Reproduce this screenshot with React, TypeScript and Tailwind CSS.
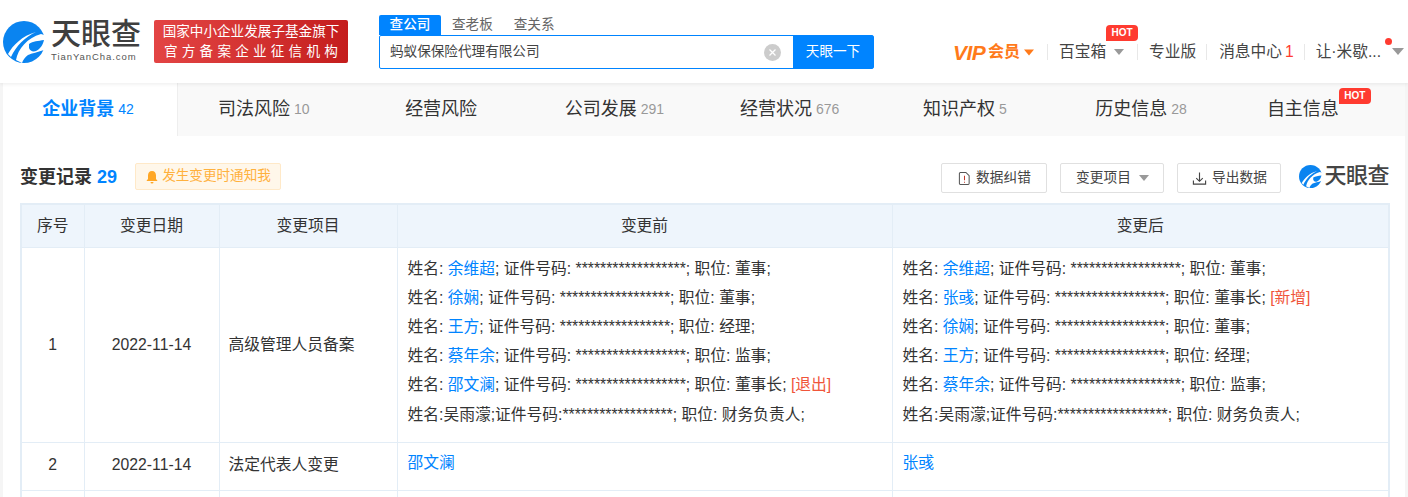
import React from "react";

const FONT = "font-['Liberation_Sans','Noto_Sans_CJK_SC',sans-serif]";

function LogoMark({ className }: { className: string }) {
  return (
    <svg viewBox="0 0 42 42" className={className}>
      <circle cx="21" cy="21" r="21" fill="#0a84f0" />
      <path d="M13 39 C15 28 24 17 38 13 L44 15 L44 28 C36 31 29 32 25 34 C22 36 20 39 19 42Z" fill="#fff" />
      <path d="M26 23 C30 20 35 20 41 19 C40 24 37 28 33 30 C30 31 27 30 26 27Z" fill="#0a84f0" />
      <path d="M5 33 C10 24 19 15 33 11 C22 16 13 25 8 36Z" fill="#fff" />
    </svg>
  );
}

function Caret({ className }: { className: string }) {
  return (
    <svg viewBox="0 0 12 7" className={className}>
      <path d="M0 0H12L6 7Z" fill="currentColor" />
    </svg>
  );
}

function Hot({ className }: { className: string }) {
  return (
    <span
      className={`absolute flex h-[16px] w-[32px] items-center justify-center rounded-t-[4px] rounded-br-[4px] rounded-bl-none bg-[#ff3b30] text-[10px] leading-none font-bold text-white ${className}`}
    >
      HOT
    </span>
  );
}

function Divider() {
  return <span className="block h-[16px] w-px bg-[#e8e8e8]" />;
}

function Header() {
  return (
    <header className="relative z-10 flex h-[83px] items-start bg-white pl-[3px] shadow-[0_1px_4px_rgba(0,0,0,0.08)]">
      <div className="mt-[21px] flex items-start">
        <LogoMark className="h-[42px] w-[42px]" />
        <div className="ml-[6px] flex w-[92px] flex-col">
          <span className="h-[30px] text-[30px] leading-[26px] font-medium text-[#3f3f3f]">天眼查</span>
          <span className="font-['Liberation_Sans',sans-serif] text-[9.5px] leading-[11px] tracking-[0.95px] text-[#555]">
            TianYanCha.com
          </span>
        </div>
      </div>
      <div className="mt-[20px] ml-[11px] flex h-[43px] w-[194px] flex-col items-center justify-center rounded-[2px] bg-gradient-to-r from-[#e34444] to-[#c41c1c] text-white">
        <span className="text-[13.6px] leading-[20px]">国家中小企业发展子基金旗下</span>
        <span className="pl-[4px] text-[13.6px] leading-[20px] tracking-[4.200px]">官方备案企业征信机构</span>
      </div>
      <div className="mt-[15px] ml-[31px] w-[495px]">
        <div className="flex h-[20px] text-[13.6px] leading-[20px] text-[#666]">
          <span className="w-[62px] rounded-t-[2px] bg-[#0084ff] text-center font-medium text-white">查公司</span>
          <span className="ml-[11px]">查老板</span>
          <span className="ml-[21px]">查关系</span>
        </div>
        <div className="flex h-[34px] rounded-[2px] border border-[#0084ff]">
          <div className="flex flex-1 items-center justify-between pr-[12px] pl-[10px] text-[13.6px] text-[#444]">
            <span>蚂蚁保保险代理有限公司</span>
            <svg viewBox="0 0 17 17" className="h-[17px] w-[17px]">
              <circle cx="8.500" cy="8.500" r="8.500" fill="#ccc" />
              <path d="M5.500 5.500l6 6M11.500 5.500l-6 6" stroke="#fff" strokeWidth="1.300" />
            </svg>
          </div>
          <div className="flex w-[80px] items-center justify-center bg-[#0084ff] text-[13.6px] text-white">天眼一下</div>
        </div>
      </div>
      <div className="ml-[79px] flex h-[68px] flex-1 items-center pt-[36px] text-[15.7px] text-[#444]">
        <span className="flex items-center text-[#ff7a1a]">
          <span className="w-[32px] font-['Liberation_Sans',sans-serif] text-[21px] leading-none font-bold tracking-[-0.5px] italic">VIP</span>
          <span className="ml-[3px] text-[16px] font-bold">会员</span>
          <Caret className="ml-[4px] h-[7px] w-[10px]" />
        </span>
        <span className="ml-[13px]"><Divider /></span>
        <span className="relative ml-[11px] flex items-center">
          百宝箱
          <Caret className="ml-[8px] h-[6px] w-[10px] text-[#999]" />
          <Hot className="top-[-15px] left-[47px]" />
        </span>
        <span className="ml-[13px]"><Divider /></span>
        <span className="ml-[11px]">专业版</span>
        <span className="ml-[10px]"><Divider /></span>
        <span className="ml-[12px]">
          消息中心<span className="ml-[3px] text-[#ff3b30]">1</span>
        </span>
        <span className="ml-[10px]"><Divider /></span>
        <span className="relative ml-[11px] flex items-center">
          <span className="w-[65px] whitespace-nowrap">让·米歇...</span>
          <span className="absolute top-[-2px] left-[69px] h-[7px] w-[7px] rounded-full bg-[#ff3b30]" />
          <Caret className="ml-[11px] h-[7px] w-[12px] text-[#999]" />
        </span>
      </div>
    </header>
  );
}

const TABS: { label: string; count?: string; cls: string; hot?: boolean; active?: boolean }[] = [
  { label: "企业背景", count: "42", cls: "pr-[4px]", active: true },
  { label: "司法风险", count: "10", cls: "pr-[4px]" },
  { label: "经营风险", cls: "" },
  { label: "公司发展", count: "291", cls: "pr-[4px]" },
  { label: "经营状况", count: "676", cls: "pr-[4px]" },
  { label: "知识产权", count: "5", cls: "pr-[4px]" },
  { label: "历史信息", count: "28", cls: "pr-[2px]" },
  { label: "自主信息", cls: "pr-[29px]", hot: true },
];

function Tabs() {
  return (
    <nav className="grid h-[53px] grid-cols-8 bg-[#f9f9f9]">
      {TABS.map((t) => (
        <div
          key={t.label}
          className={`flex items-center justify-center ${t.cls} ${t.active ? "border-r border-[#eeeeee] bg-white" : ""}`}
        >
          <span className={`relative text-[18px] ${t.active ? "font-bold text-[#0084ff]" : "text-[#333]"}`}>
            {t.label}
            {t.hot && <Hot className="top-[-8px] left-[72px]" />}
          </span>
          {t.count && (
            <span className={`ml-[4px] text-[14px] ${t.active ? "text-[#0084ff]" : "text-[#999]"}`}>{t.count}</span>
          )}
        </div>
      ))}
    </nav>
  );
}

function Toolbar() {
  const btn =
    "flex h-[30px] items-center justify-center rounded-[2px] border border-[#e0e0e0] bg-white text-[13.7px] text-[#444]";
  return (
    <div className="flex h-[67px] items-start pt-[27px] pr-[16px] pl-[17px]">
      <span className="mt-[1px] text-[18px] leading-[26px] font-bold text-[#333]">变更记录</span>
      <span className="mt-[1px] ml-[5px] font-['Liberation_Sans',sans-serif] text-[18px] leading-[26px] font-bold text-[#0084ff]">29</span>
      <span className="ml-[18px] flex h-[27px] w-[146px] items-center justify-center rounded-[2px] border border-[#ffe9c8] bg-[#fff7ea] text-[13.6px] text-[#ffb13d]">
        <svg viewBox="0 0 14 14" className="mr-[3px] h-[14px] w-[14px]">
          <path d="M7 1c-2.600 0-4 2-4 4.500V9l-1.300 1.500v.5h10.600v-.5L11 9V5.500C11 3 9.600 1 7 1zM5.500 12a1.500 1.500 0 003 0z" fill="#ffa726" />
        </svg>
        发生变更时通知我
      </span>
      <div className="ml-auto flex items-start">
        <span className={`${btn} w-[106px]`}>
          <svg viewBox="0 0 14 16" className="mr-[5px] h-[15px] w-[13px]" fill="none" stroke="#555" strokeWidth="1.100">
            <path d="M2.500 1.500h6l3.500 3.500v8.500a1 1 0 01-1 1h-8.500a1 1 0 01-1-1v-11a1 1 0 011-1z" />
            <path d="M7 5v5M7 11.500v1" stroke="#c0392b" />
          </svg>
          数据纠错
        </span>
        <span className={`${btn} ml-[13px] w-[104px]`}>
          变更项目
          <Caret className="ml-[8px] h-[6px] w-[10px] text-[#999]" />
        </span>
        <span className={`${btn} ml-[13px] w-[104px]`}>
          <svg viewBox="0 0 16 16" className="mr-[5px] h-[15px] w-[15px]" fill="none" stroke="#444" strokeWidth="1.200">
            <path d="M8 1.500v9M4.500 7.500L8 11l3.500-3.500M1.500 10v4h13v-4" />
          </svg>
          导出数据
        </span>
        <span className="ml-[18px] flex items-center">
          <LogoMark className="h-[23px] w-[23px]" />
          <span className="ml-[2px] text-[22px] leading-[26px] font-medium tracking-[-0.5px] text-[#444]">天眼查</span>
        </span>
      </div>
    </div>
  );
}

const A = ({ children }: { children: React.ReactNode }) => <span className="text-[#0084ff]">{children}</span>;
const STARS = "******************";
const Line = ({ name, job, exit, plus }: { name: string; job: string; exit?: boolean; plus?: boolean }) => (
  <div>
    姓名: <A>{name}</A>; 证件号码: {STARS}; 职位: {job};
    {exit && <span className="text-[#f0553a]"> [退出]</span>}
    {plus && <span className="text-[#f0553a]"> [新增]</span>}
  </div>
);
const LastLine = () => (
  <div>
    姓名:吴雨濛;证件号码:{STARS}; 职位: 财务负责人;
  </div>
);

function ChangeTable() {
  const th = "border border-[#e3edf6] bg-[#eef5fc] text-center font-normal";
  const td = "border border-[#e3edf6] text-center";
  const left = "border border-[#e3edf6] px-[9px] text-left";
  const cell = "border border-[#e3edf6] pr-[9px] pl-[10px] align-top";
  return (
    <div className="px-[17px]">
      <table className="w-[1368px] table-fixed border-collapse border-2 border-[#e3edf6] text-[15.75px] text-[#333]">
        <colgroup>
          <col className="w-[63px]" />
          <col className="w-[135px]" />
          <col className="w-[178px]" />
          <col className="w-[495px]" />
          <col className="w-[497px]" />
        </colgroup>
        <thead>
          <tr className="h-[43px]">
            <th className={th}>序号</th>
            <th className={th}>变更日期</th>
            <th className={th}>变更项目</th>
            <th className={th}>变更前</th>
            <th className={th}>变更后</th>
          </tr>
        </thead>
        <tbody>
          <tr className="h-[195px]">
            <td className={td}>1</td>
            <td className={td}>2022-11-14</td>
            <td className={left}>高级管理人员备案</td>
            <td className={`${cell} pt-[6px] leading-[29.200px]`}>
              <Line name="余维超" job="董事" />
              <Line name="徐娴" job="董事" />
              <Line name="王方" job="经理" />
              <Line name="蔡年余" job="监事" />
              <Line name="邵文澜" job="董事长" exit />
              <LastLine />
            </td>
            <td className={`${cell} pt-[6px] leading-[29.200px]`}>
              <Line name="余维超" job="董事" />
              <Line name="张彧" job="董事长" plus />
              <Line name="徐娴" job="董事" />
              <Line name="王方" job="经理" />
              <Line name="蔡年余" job="监事" />
              <LastLine />
            </td>
          </tr>
          <tr className="h-[48px]">
            <td className={`${td} pb-[2px]`}>2</td>
            <td className={`${td} pb-[2px]`}>2022-11-14</td>
            <td className={`${left} pb-[2px]`}>法定代表人变更</td>
            <td className={`${cell} pt-[8px] leading-[24px]`}><A>邵文澜</A></td>
            <td className={`${cell} pt-[8px] leading-[24px]`}><A>张彧</A></td>
          </tr>
          <tr className="h-[48px]">
            <td className={td} />
            <td className={td} />
            <td className={td} />
            <td className={td} />
            <td className={td} />
          </tr>
        </tbody>
      </table>
    </div>
  );
}

export default function App() {
  return (
    <div className={`h-[497px] w-[1408px] overflow-hidden bg-[#f5f5f5] ${FONT}`}>
      <Header />
      <main className="mx-[3px] h-[414px] bg-white">
        <Tabs />
        <Toolbar />
        <ChangeTable />
      </main>
    </div>
  );
}
